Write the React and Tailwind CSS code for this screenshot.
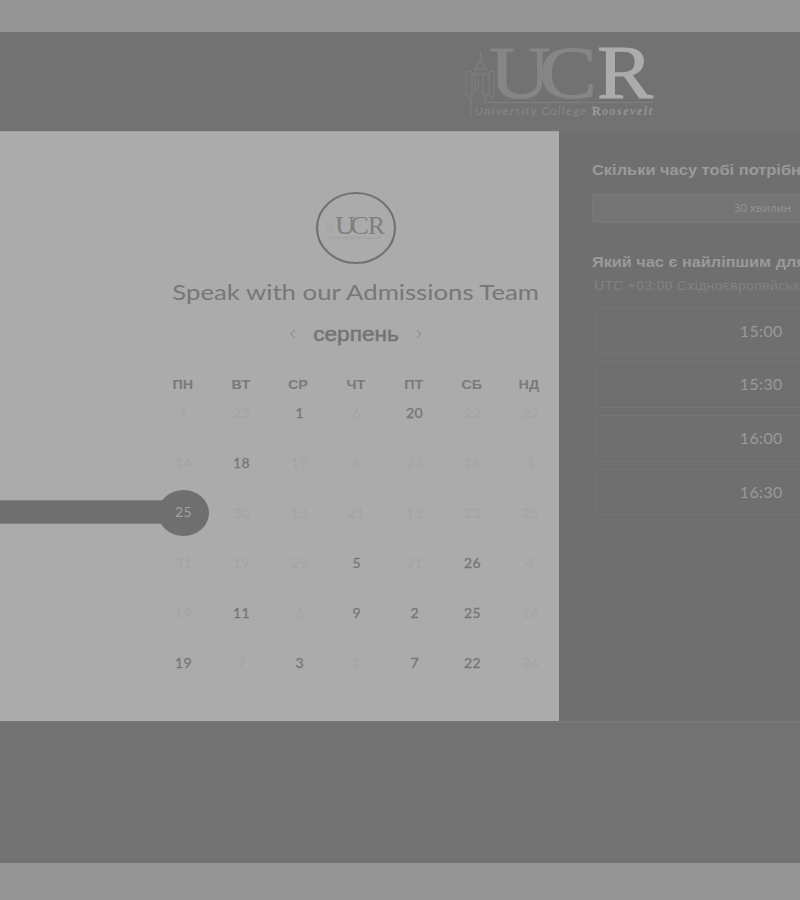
const weekdays = ["ПН", "ВТ", "СР", "ЧТ", "ПТ", "СБ", "НД"];

// Each day is [label, state]: 0 unavailable, 1 available, 2 selected.
const weeks = [
  [["1", 0], ["23", 0], ["1", 1], ["6", 0], ["20", 1], ["22", 0], ["22", 0]],
  [["14", 0], ["18", 1], ["19", 0], ["6", 0], ["23", 0], ["16", 0], ["4", 0]],
  [["25", 2], ["30", 0], ["13", 0], ["21", 0], ["13", 0], ["23", 0], ["25", 0]],
  [["31", 0], ["19", 0], ["29", 0], ["5", 1], ["21", 0], ["26", 1], ["4", 0]],
  [["19", 0], ["11", 1], ["6", 0], ["9", 1], ["2", 1], ["25", 1], ["16", 0]],
  [["19", 1], ["7", 0], ["3", 1], ["1", 0], ["7", 1], ["22", 1], ["26", 0]],
];

const times = ["15:00", "15:30", "16:00", "16:30"];

function Logo() {
  return (
    <svg width="196" height="80" viewBox="0 0 196 80" className="block overflow-visible">
      <path
        d="M17.500 7v10M17.500 17l-6 8v5h12v-5zM12 25h11M3 30q0-3 3-3t3 3v20l-3 3-3-3zM26 30q0-3 3-3t2 3v20l-2 3-3-3zM9 29h3v18l3-3V30M20 30v20l3 3 3-4M23 32h3M8 53v21M22 53v5"
        fill="none"
        stroke="#7d7d7d"
        strokeWidth="1.3"
      />
      <path d="M22 58.500H190" stroke="#808080" strokeWidth="1" />
      <g style={{ fontFamily: "'Liberation Serif', serif" }}>
        <text x="26" y="53.500" fontSize="75" textLength="62" lengthAdjust="spacingAndGlyphs" fill="#868686" stroke="#868686" strokeWidth=".8">U</text>
        <text x="76" y="53.500" fontSize="75" textLength="58" lengthAdjust="spacingAndGlyphs" fill="#868686" stroke="#868686" strokeWidth=".8">C</text>
        <text x="134" y="54" fontSize="76" textLength="56" lengthAdjust="spacingAndGlyphs" fill="#acacac" stroke="#acacac" strokeWidth="1">R</text>
        <text x="129" y="70.500" fontSize="13" fill="#a0a0a0" stroke="#a0a0a0" strokeWidth=".3">R</text>
        <text x="139" y="70.500" fontSize="12" textLength="50" fontWeight="bold" fontStyle="italic" fill="#929292">oosevelt</text>
      </g>
      <text x="12" y="70.500" fontSize="11" textLength="111" fill="#858585" stroke="#858585" strokeWidth=".2" style={{ fontFamily: "Lato, sans-serif" }}>University College</text>
    </svg>
  );
}

function Avatar() {
  return (
    <svg width="82" height="74" viewBox="0 0 82 74" className="block">
      <ellipse cx="41" cy="37" rx="39" ry="35" fill="none" stroke="#727272" strokeWidth="2.2" />
      <path d="M15 31v-3M12 33h6v7h-6zM14 33v7M16 33v7" fill="none" stroke="#a3a3a3" strokeWidth=".7" />
      <g fill="#7f7f7f" style={{ fontFamily: "'Liberation Serif', serif" }}>
        <text x="20" y="42.500" fontSize="25" textLength="20" lengthAdjust="spacingAndGlyphs">U</text>
        <text x="35" y="42.500" fontSize="25" textLength="19" lengthAdjust="spacingAndGlyphs">C</text>
        <text x="53" y="42.500" fontSize="25" textLength="17" lengthAdjust="spacingAndGlyphs">R</text>
      </g>
      <text x="15" y="48" fontSize="4" textLength="51" fill="#9c9c9c" style={{ fontFamily: "Lato, sans-serif" }}>University College Roosevelt</text>
    </svg>
  );
}

function Chevron({ d }) {
  return (
    <svg width="8" height="10" viewBox="0 0 8 10" className="block">
      <path d={d} fill="none" stroke="#8b8b8b" strokeWidth="1.1" />
    </svg>
  );
}

function Day({ day }) {
  const [label, state] = day;
  if (state === 2) {
    return (
      <div className="flex h-[50px] items-center justify-center">
        <div className="-mt-px flex h-[46px] w-[51px] shrink-0 items-center justify-center rounded-[50%] bg-[#6f6f6f] text-[#a2a2a2]">
          <span className="scale-x-[1.12]">{label}</span>
        </div>
      </div>
    );
  }
  return (
    <div className={state ? "flex h-[50px] items-center justify-center pt-0.5 text-[#777777] [-webkit-text-stroke:0.3px_#777777]" : "flex h-[50px] items-center justify-center pt-0.5 text-[#a4a4a4]"}>
      <span className="scale-x-[1.12]">{label}</span>
    </div>
  );
}

export default function App() {
  return (
    <div className="flex h-[900px] w-[800px] flex-col overflow-hidden bg-[#959595] pt-8 font-['Lato','Open_Sans',sans-serif]">
      <header className="flex h-[99px] shrink-0 justify-start bg-[#727272] pt-3 pl-[463px]">
        <Logo />
      </header>
      <main className="flex h-[590px] shrink-0 bg-[#6f6f6f]">
        <section className="flex w-[559px] shrink-0 flex-col border-t border-[#a2a2a2] bg-[#ababab]">
          <div className="ml-[154px] flex w-[404px] flex-col items-center pt-[59px]">
            <Avatar />
            <h1 className="mt-[11px] h-8 origin-center scale-x-[1.17] text-[22px] leading-8 whitespace-nowrap text-[#777777]">Speak with our Admissions Team</h1>
            <div className="mt-2.5 flex h-8 items-center justify-center gap-5">
              <Chevron d="M5.500 1 2 5l3.500 4" />
              <span className="w-[78px] scale-x-[1.13] text-center font-['Liberation_Sans',sans-serif] text-[20px] leading-8 text-[#747474] [-webkit-text-stroke:0.5px_#747474]">серпень</span>
              <Chevron d="M2 1l3.500 4L2 9" />
            </div>
          </div>
          <div className="mt-[25px] ml-[154px] grid h-5 w-[404px] grid-cols-7 text-center font-['Liberation_Sans',sans-serif] text-[13px] leading-5 font-bold text-[#7a7a7a]">
            {weekdays.map((d) => <span key={d} className="scale-x-110">{d}</span>)}
          </div>
          <div className="-mt-[7px] flex flex-col text-[12.500px] leading-5 tracking-wide">
            {weeks.map((week, i) => (
              <div key={i} className="flex">
                <div className="flex w-[155px] shrink-0 items-center">
                  {i === 2 && <div className="-mr-4 mb-0.5 h-6 flex-1 border-y border-[#858585] bg-[#6f6f6f]" />}
                </div>
                <div className="grid w-[404px] grid-cols-7">
                  {week.map((day, j) => <Day key={j} day={day} />)}
                </div>
              </div>
            ))}
          </div>
        </section>
        <section className="w-[241px] overflow-hidden pl-[33px] whitespace-nowrap">
          <h2 className="mt-[27px] origin-left scale-x-[1.06] font-['Liberation_Sans',sans-serif] text-[15.500px] leading-6 font-bold text-[#9a9a9a]">Скільки часу тобі потрібно?</h2>
          <div className="mt-3 flex h-[29px] w-[341px] items-center justify-center rounded-xs border border-[#797979] bg-[#757575] pb-px font-['Open_Sans',sans-serif] text-[11.500px] text-[#939393]">30 хвилин</div>
          <h2 className="mt-[27px] origin-left scale-x-[1.05] font-['Liberation_Sans',sans-serif] text-[15.500px] leading-6 font-bold text-[#9a9a9a]">Який час є найліпшим для тебе?</h2>
          <p className="mt-0.5 ml-0.5 origin-left scale-x-[1.07] font-['Liberation_Sans',sans-serif] text-[13px] leading-5 tracking-wide text-[#838383]">UTC +03:00 Східноєвропейський час</p>
          <div className="mt-[11.500px] ml-1 flex w-[330px] flex-col gap-[7px]">
            {times.map((t) => (
              <div key={t} className="flex h-[46.700px] items-center justify-center rounded-[3px] border border-[#757575] text-[15px] tracking-wide text-[#9a9a9a]">
                <span className="scale-x-[1.06]">{t}</span>
              </div>
            ))}
          </div>
        </section>
      </main>
      <footer className="h-[142px] shrink-0 border-t-2 border-[#777777] bg-[#727272]" />
    </div>
  );
}
